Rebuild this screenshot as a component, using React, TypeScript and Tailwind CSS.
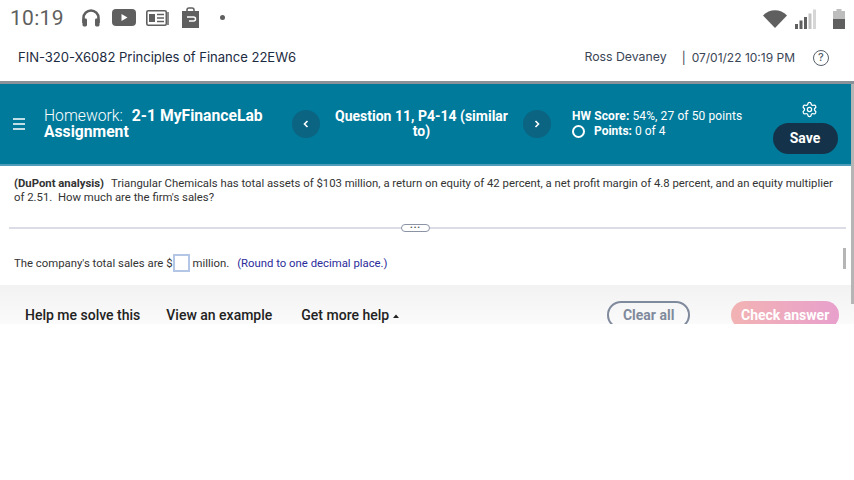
import React from "react";
import { Settings } from "lucide-react";

const Headphones = () => (
  <svg width="20" height="20" viewBox="0 0 20 20" fill="none">
    <path d="M2.500 15V10a7.500 7.500 0 0 1 15 0v5" stroke="#5f5f5f" strokeWidth="2.600" />
    <rect x="1.500" y="10.500" width="4.500" height="8" rx="1.400" fill="#5f5f5f" />
    <rect x="14" y="10.500" width="4.500" height="8" rx="1.400" fill="#5f5f5f" />
  </svg>
);
const Youtube = () => (
  <svg width="24" height="17" viewBox="0 0 24 17">
    <rect width="24" height="17" rx="4" fill="#5f5f5f" />
    <path d="M9.500 5v7l6-3.500z" fill="#fff" />
  </svg>
);
const News = () => (
  <svg width="23" height="16" viewBox="0 0 23 16">
    <rect x="0.800" y="0.800" width="19.500" height="14.400" rx="1.500" fill="none" stroke="#5f5f5f" strokeWidth="1.600" />
    <rect x="21" y="2" width="2" height="13" fill="#8a8a8a" />
    <rect x="3" y="4" width="6" height="8" fill="#5f5f5f" />
    <path d="M11 4.500h7M11 8h7M11 11.500h7" stroke="#5f5f5f" strokeWidth="1.500" />
  </svg>
);
const Bag = () => (
  <svg width="17" height="21" viewBox="0 0 17 21">
    <path d="M5 5V3a2 2 0 0 1 2-2h3a2 2 0 0 1 2 2v2" fill="none" stroke="#5f5f5f" strokeWidth="1.500" />
    <rect y="4" width="17" height="17" fill="#5f5f5f" />
    <path d="M5 10h6.500a1.800 1.800 0 0 1 0 4H7" fill="none" stroke="#fff" strokeWidth="1.500" />
  </svg>
);
const Wifi = () => (
  <svg width="24" height="18" viewBox="0 0 24 18">
    <path d="M0 5.500C6.500-1.500 17.500-1.500 24 5.500L12 18z" fill="#5f5f5f" />
  </svg>
);
const Signal = () => (
  <svg width="21" height="20" viewBox="0 0 21 20">
    <rect x="0" y="15" width="3" height="5" fill="#5f5f5f" />
    <rect x="4.500" y="11.500" width="3" height="8.500" fill="#5f5f5f" />
    <rect x="9" y="8" width="3" height="12" fill="#5f5f5f" />
    <rect x="13.500" y="4.500" width="3" height="15.500" fill="#c4c4c4" />
    <rect x="18" y="0.500" width="3" height="19.500" fill="#d6d6d6" />
  </svg>
);
const Battery = () => (
  <svg width="12" height="20" viewBox="0 0 12 20">
    <rect x="3.500" y="0" width="5" height="2" fill="#bdbdbd" />
    <rect x="0" y="2" width="12" height="8" fill="#bdbdbd" />
    <rect x="0" y="10" width="12" height="10" fill="#5f5f5f" />
  </svg>
);
const Chevron = ({ d }: { d: string }) => (
  <svg width="8" height="10" viewBox="0 0 8 10" fill="none" stroke="#fff" strokeWidth="1.600">
    <path d={d} />
  </svg>
);

export default function App() {
  return (
    <div className="relative h-[324px] w-[854px] overflow-hidden bg-white font-['Roboto',sans-serif]">
      <div className="flex h-[38px] items-center pb-px pl-[10px] pr-[9px]">
        <span className="w-[71px] text-[21px] leading-none tracking-[0.300px] text-[#5f5f5f]">10:19</span>
        <div className="mb-[2px] flex items-center">
          <Headphones />
          <div className="ml-[11px]"><Youtube /></div>
          <div className="ml-[10px]"><News /></div>
          <div className="ml-[13px]"><Bag /></div>
          <div className="ml-[21px] h-[5px] w-[5px] rounded-full bg-[#5f5f5f]" />
        </div>
        <div className="ml-auto flex items-center">
          <Wifi />
          <div className="ml-[8px]"><Signal /></div>
          <div className="ml-[17px]"><Battery /></div>
        </div>
      </div>

      <div className="flex h-[43px] items-center pb-[4px] pl-[18px] pr-[25px] font-['Inter',sans-serif] text-[#1c2b3f]">
        <span className="text-[13.100px] tracking-[-0.040px]">FIN-320-X6082 Principles of Finance 22EW6</span>
        <span className="ml-auto text-[12.300px] text-[#3a4656]">Ross Devaney</span>
        <span className="ml-[15px] text-[12px] text-[#3a4656]">|</span>
        <span className="ml-[6px] text-[12px] text-[#3a4656]">07/01/22 10:19 PM</span>
        <span className="ml-[18px] flex h-[16px] w-[16px] items-center justify-center rounded-full border border-[#555f6b] text-[11px] leading-none font-medium text-[#555f6b]">?</span>
      </div>

      <div className="h-[3px] bg-[#8b9198]" />

      <div className="flex h-[82px] border-b-[2px] border-[#4d9cba] bg-[#007a9b] text-white">
        <div className="flex w-[292px] shrink-0 pl-[13px] pt-[24px]">
          <svg width="12" height="12" viewBox="0 0 12 12" className="mt-[10px]" stroke="#fff" strokeWidth="1.500">
            <path d="M0 1h12M0 6h12M0 11h12" />
          </svg>
          <div className="ml-[19px] text-[15.700px] leading-[16px]">
            <span className="font-light">Homework:</span>
            <span className="ml-[9px] font-bold">2-1 MyFinanceLab</span>
            <div className="font-bold">Assignment</div>
          </div>
        </div>
        <div className="mt-[26px] flex h-[28px] w-[28px] shrink-0 items-center justify-center rounded-full bg-[#0b6481]"><Chevron d="M5.500 2L2.500 5l3 3" /></div>
        <div className="w-[203px] shrink-0 px-[14px] pt-[25px] text-center text-[14px] leading-[15px] font-bold">Question 11, P4-14 (similar to)</div>
        <div className="mt-[26px] flex h-[28px] w-[28px] shrink-0 items-center justify-center rounded-full bg-[#0b6481]"><Chevron d="M2.500 2l3 3-3 3" /></div>
        <div className="ml-[21px] w-[200px] shrink-0 pt-[25px] text-[12px] leading-[15px]">
          <div className="tracking-[0.100px]"><span className="font-bold">HW Score:</span> 54%, 27 of 50 points</div>
          <div className="flex items-center">
            <span className="h-[13px] w-[13px] rounded-full border-[2px] border-white" />
            <span className="ml-[9px]"><span className="font-bold">Points:</span> 0 of 4</span>
          </div>
        </div>
        <div className="flex w-[66px] shrink-0 flex-col items-center pt-[17px]">
          <Settings size={17} strokeWidth={1.800} className="ml-[9px]" />
          <div className="mt-[5px] flex h-[31px] w-[65px] items-center justify-center rounded-full bg-[#14334a] text-[14px] font-bold">Save</div>
        </div>
      </div>

      <div className="pl-[14px] pr-[18px] pt-[10px] text-[11.330px] leading-[14px] text-[#333]">
        <span className="font-bold">(DuPont analysis)</span>
        <span className="ml-[7px]">Triangular Chemicals has total assets of $103 million, a return on equity of 42 percent, a net profit margin of 4.8 percent, and an equity multiplier of 2.51.&nbsp; How much are the firm's sales?</span>
      </div>

      <div className="ml-[9px] mt-[20px] flex w-[837px] items-center">
        <div className="h-[2px] w-[392px] bg-[#dcdce6]" />
        <div className="flex h-[8px] w-[29px] items-center justify-center rounded-full border border-[#8b93a5] bg-white text-[8px] leading-none tracking-[1px] text-[#555]">•••</div>
        <div className="h-[2px] flex-1 bg-[#dcdce6]" />
      </div>

      <div className="mt-[22px] flex items-center pl-[14px] text-[11.330px] text-[#333]">
        <span>The company's total sales are $</span>
        <span className="h-[18px] w-[17px] border-[2px] border-[#b3c6e6]" />
        <span className="ml-[3px]">million.</span>
        <span className="ml-[8px] text-[#2b2b9b]">(Round to one decimal place.)</span>
      </div>

      <div className="mt-[13px] flex h-[60px] items-start bg-gradient-to-b from-[#f2f2f2] to-white pl-[25px] pt-[20px] text-[14px] font-medium">
        <span className="text-[#222]">Help me solve this</span>
        <span className="ml-[26px] text-[#222]">View an example</span>
        <span className="ml-[29px] flex items-center text-[#222]">
          Get more help
          <svg width="6" height="4" viewBox="0 0 6 4" className="ml-[4px]"><path d="M0 4l3-3.500L6 4z" fill="#222" /></svg>
        </span>
        <div className="-mt-[4px] ml-[208px] flex h-[28px] w-[83px] items-center justify-center rounded-full border-[2px] border-[#7f8a9c] font-bold text-[#7f8a9c]">Clear all</div>
        <div className="-mt-[4px] ml-[41px] flex h-[28px] w-[108px] items-center justify-center rounded-full bg-gradient-to-r from-[#f2b3b3] to-[#e8a0cc] font-bold text-white">Check answer</div>
      </div>

      <div className="absolute right-0 top-[84px] h-[220px] w-[3px] bg-[#b5b5b5]" />
      <div className="absolute left-[843px] top-[248px] h-[21px] w-[3px] bg-[#b5b5b5]" />
    </div>
  );
}
